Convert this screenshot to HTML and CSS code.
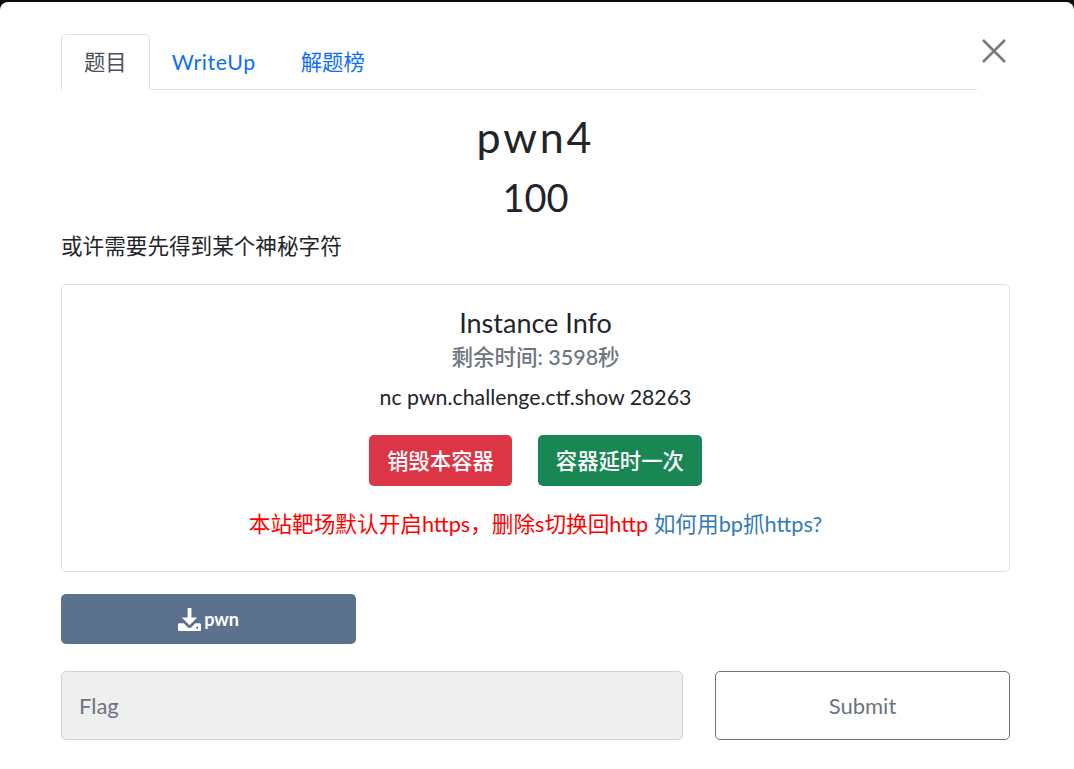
FILE: index.html
```html
<!DOCTYPE html>
<html lang="zh">
<head>
<meta charset="utf-8">
<title>pwn4</title>
<link rel="stylesheet" href="styles.css">
</head>
<body>
<div class="modal">
  <button class="close" aria-label="Close">
    <svg viewBox="0 0 24 24" width="24" height="24"><path d="M1 1L23 23M23 1L1 23" stroke="#7b7b7b" stroke-width="2.6" fill="none"/></svg>
  </button>
  <nav class="tabs">
    <a class="tab active">题目</a>
    <a class="tab">WriteUp</a>
    <a class="tab">解题榜</a>
  </nav>
  <h2 class="title">pwn4</h2>
  <h3 class="value">100</h3>
  <p class="desc">或许需要先得到某个神秘字符</p>
  <section class="card">
    <h5 class="card-title">Instance Info</h5>
    <h6 class="card-sub">剩余时间: 3598秒</h6>
    <p class="conn">nc pwn.challenge.ctf.show 28263</p>
    <div class="actions">
      <button class="btn danger">销毁本容器</button>
      <button class="btn success">容器延时一次</button>
    </div>
    <p class="notice"><span class="red">本站靶场默认开启https，删除s切换回http</span> <a class="link">如何用bp抓https?</a></p>
  </section>
  <a class="download">
    <svg class="dl-icon" viewBox="0 0 24 24" width="23" height="23"><path fill="#fff" d="M10 0h4v10h6L12 18 4 10h6z"/><path fill="#fff" d="M0 17.500C0 16.700.7 16 1.500 16H6L10 20c1.100 1.100 2.900 1.100 4 0L18 16h4.500c.8 0 1.500.7 1.500 1.500V23c0 .6-.7 1-1.500 1H1.500C.7 24 0 23.600 0 23z"/><circle cx="20" cy="20.500" r="1.100" fill="#5c718d"/></svg>
    <span>pwn</span>
  </a>
  <form class="flag-row">
    <input class="flag" placeholder="Flag" disabled>
    <button class="submit" type="button">Submit</button>
  </form>
</div>
</body>
</html>
```
FILE: styles.css
```css
* { box-sizing: border-box; }
html, body { margin: 0; height: 100%; }
body {
  background: #0c0c0c;
  font-family: Lato, "Noto Sans CJK SC", sans-serif;
  color: #212529;
  overflow: hidden;
}
.modal {
  position: relative;
  margin-top: 2px;
  height: 767px;
  background: #fff;
  border-radius: 8px 8px 0 0;
  padding: 32px 64px 0 61px;
}
.close {
  position: absolute;
  top: 37px;
  right: 68px;
  width: 24px;
  height: 24px;
  padding: 0;
  border: 0;
  background: none;
  display: block;
}
.close svg { display: block; }
.tabs {
  display: flex;
  margin-right: 33px;
  height: 56px;
  border-bottom: 1px solid #dee2e6;
}
.tab {
  height: 56px;
  padding: 12px 22px;
  font-size: 21.33px;
  line-height: 30px;
  color: #0d6efd;
  border: 1px solid transparent;
}
.tab + .tab { margin-left: -1px; }
.tab:nth-child(2) { letter-spacing: 0.6px; }
.tab.active {
  color: #495057;
  background: #fff;
  border-color: #dee2e6 #dee2e6 #fff;
  border-radius: 5px 5px 0 0;
}
.title {
  margin: 18px 0 0;
  font-size: 43px;
  line-height: 58px;
  font-weight: 400;
  letter-spacing: 2.8px;
  text-align: center;
}
.value {
  margin: 8px 0 0;
  font-size: 38px;
  line-height: 46px;
  font-weight: 400;
  text-align: center;
}
.desc {
  margin: 11px 0 0;
  font-size: 21.6px;
  line-height: 30px;
}
.card {
  margin-top: 23px;
  height: 288px;
  padding: 20px 20px 0;
  border: 1px solid #dfdfdf;
  border-radius: 5px;
  text-align: center;
}
.card-title {
  margin: 0;
  font-size: 27px;
  line-height: 36px;
  font-weight: 400;
}
.card-sub {
  margin: 1px 0 0;
  font-size: 21.5px;
  line-height: 30px;
  font-weight: 500;
  color: #6c757d;
}
.conn {
  margin: 10px 0 0;
  font-size: 21.3px;
  line-height: 30px;
}
.actions {
  margin-top: 23px;
  display: flex;
  justify-content: center;
  gap: 26px;
}
.btn {
  height: 51px;
  padding: 0 18px 3px;
  border: 0;
  border-radius: 5px;
  font-family: inherit;
  font-size: 21.33px;
  color: #fff;
  font-weight: 500;
}
.danger { background: #dc3545; }
.success { background: #198754; }
.notice {
  margin: 23px 0 0;
  font-size: 21.65px;
  line-height: 30px;
}
.red { color: #f00; }
.link { color: #337ab7; }
.download {
  margin-top: 22px;
  width: 295px;
  height: 50px;
  background: #5c718d;
  border-radius: 5px;
  display: flex;
  align-items: center;
  justify-content: center;
  gap: 3px;
  color: #fff;
  font-size: 18px;
  font-weight: 700;
}
.dl-icon { display: block; }
.flag-row {
  margin-top: 27px;
  display: flex;
  gap: 32px;
}
.flag {
  flex: 1;
  height: 69px;
  padding: 0 18px 0 17px;
  background: #efefef;
  border: 1px solid #ced4da;
  border-radius: 5px;
  font-family: inherit;
  font-size: 22px;
}
.flag::placeholder { color: #6c757d; opacity: 1; }
.submit {
  width: 295px;
  height: 69px;
  background: #fff;
  border: 1px solid #6c757d;
  border-radius: 5px;
  font-family: inherit;
  font-size: 22px;
  color: #6c757d;
}
```
